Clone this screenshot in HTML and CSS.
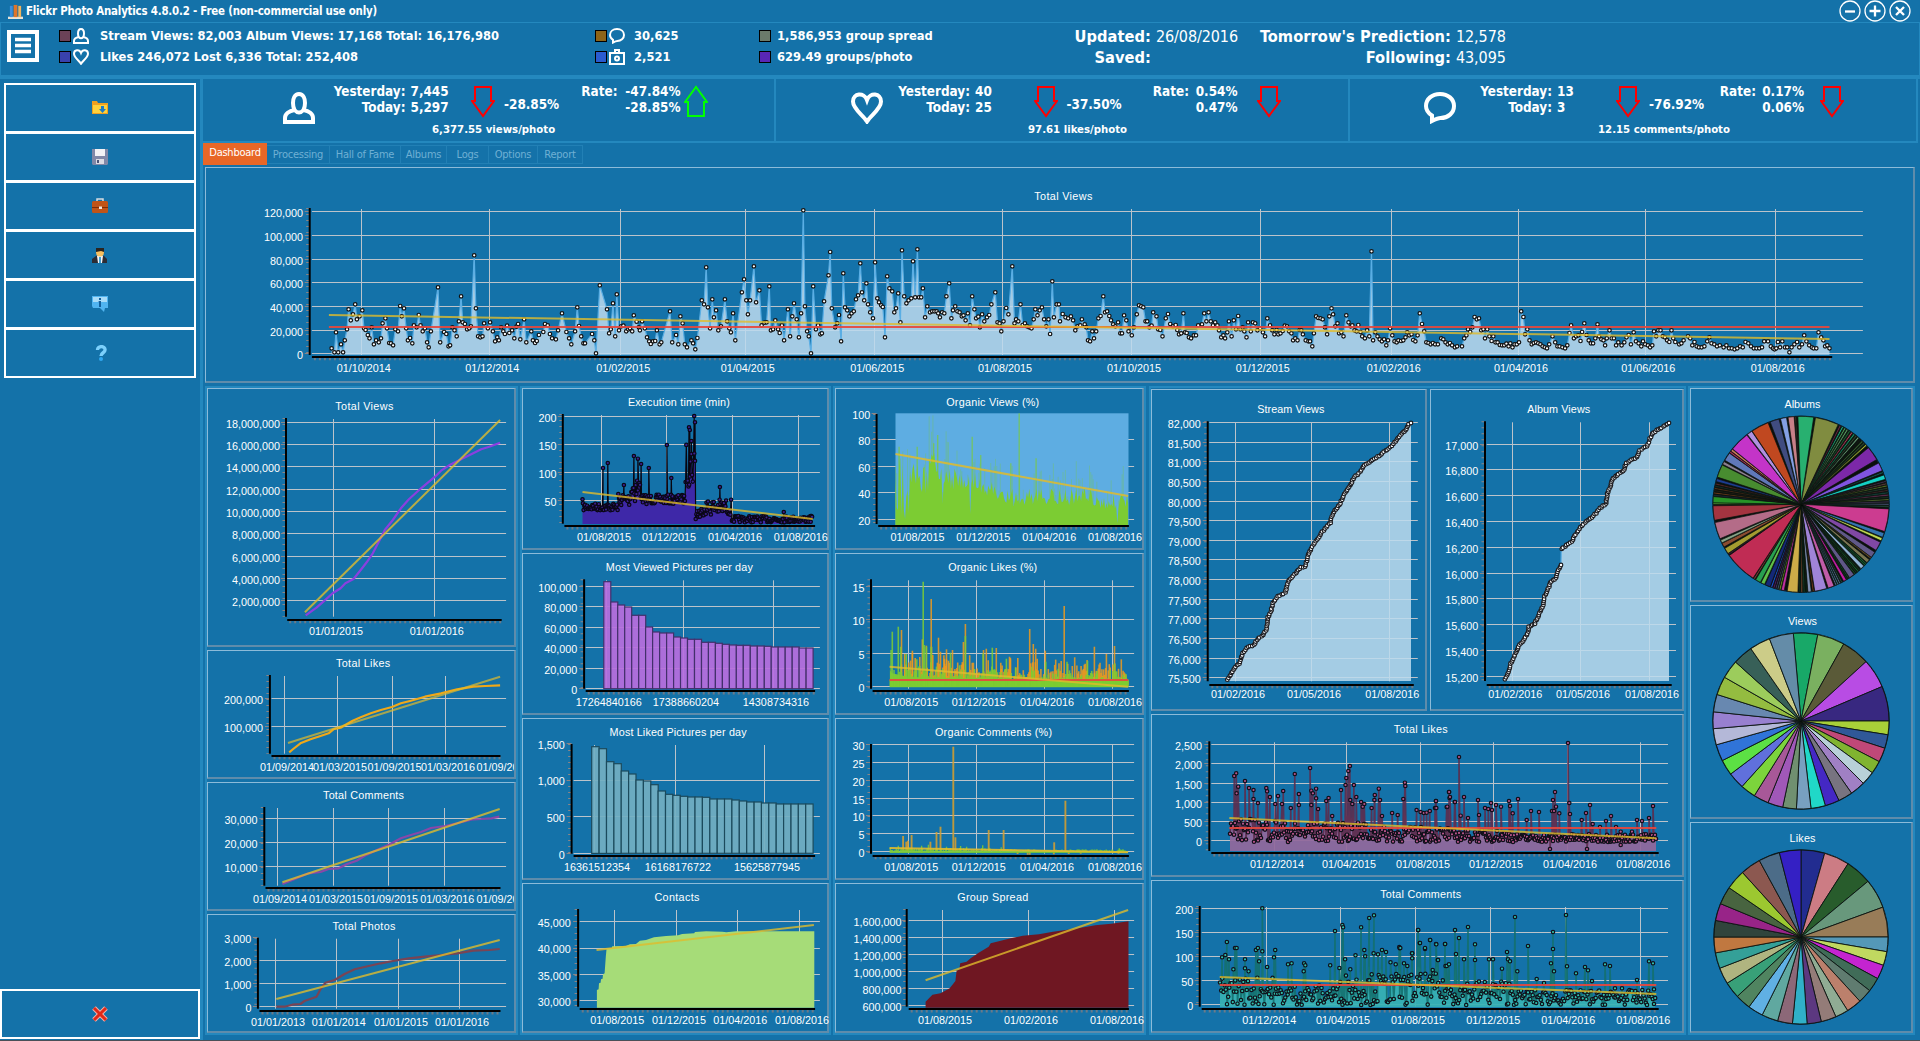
FILE: index.html
```html
<!DOCTYPE html>
<html lang="en">
<head>
<meta charset="utf-8">
<title>Flickr Photo Analytics</title>
<link rel="stylesheet" href="styles.css">
</head>
<body>
<svg class="defs" width="0" height="0">
  <symbol id="user" viewBox="0 0 32 32"><path d="M16 2c-4.500 0-6 5-6 9 0 3 .5 5 1.500 7C6 19 2 22 2 26v4h28v-4c0-4-4-7-9.500-8 1-2 1.500-4 1.500-7 0-4-1.500-9-6-9zM11.500 18q4.500 5 9 0" fill="none" stroke="#fff" stroke-width="4"/></symbol>
  <symbol id="heart" viewBox="0 0 32 32"><path d="M16 29.500C12 23 2 17 2 9.500 2 1 13 0 16 8 19 0 30 1 30 9.500 30 17 20 23 16 29.500z" fill="none" stroke="#fff" stroke-width="4"/></symbol>
  <symbol id="chat" viewBox="0 0 32 32"><path d="M8 29v-5.500C4 21 2 18 2 14 2 7 8 2 16 2s14 5 14 12-6 12-13.500 12C14 26 12 27 8 29z" fill="none" stroke="#fff" stroke-width="4"/></symbol>
  <symbol id="camera" viewBox="0 0 16 16"><path d="M1 4h14v11H1zM6 4V1h4v3" fill="none" stroke="#fff" stroke-width="2"/><circle cx="8" cy="9.500" r="2" fill="none" stroke="#fff" stroke-width="2"/></symbol>
  <symbol id="arrow" viewBox="0 0 24 33"><path d="M4 2H20V16H23L12 31 1 16H4Z" fill="none" stroke="currentColor" stroke-width="2"/></symbol>
</svg>

<div class="titlebar">
  <svg class="logo" viewBox="0 0 16 16"><path d="M0 13.500h16V16H0z" fill="#e8e4da"/><path d="M2 2h3v12H2z" fill="#3b8fe0"/><path d="M6 1h4v13H6z" fill="#e0752a"/><path d="M11 2h3v12h-3z" fill="#f0b45c"/></svg>
  <h1>Flickr Photo Analytics 4.8.0.2 - Free (non-commercial use only)</h1>
  <div class="winbtns">
    <svg viewBox="0 0 22 22"><circle cx="11" cy="11" r="10"/><path d="M6 11.500h10"/></svg>
    <svg viewBox="0 0 22 22"><circle cx="11" cy="11" r="10"/><path d="M5.500 11h11M11 5.500v11"/></svg>
    <svg viewBox="0 0 22 22"><circle cx="11" cy="11" r="10"/><path d="M7 7l8 8M15 7l-8 8" stroke-width="3"/></svg>
  </div>
</div>

<header class="summary">
  <svg class="menu" viewBox="0 0 32 32"><path d="M2 2h28v28H2z" fill="none" stroke="#fff" stroke-width="4"/><path d="M8 9.500h16M8 15.500h16M8 21.500h16" stroke="#fff" stroke-width="3.600"/></svg>
  <div class="legend l1">
    <div><i class="sw s1"></i><svg><use href="#user"/></svg><span>Stream Views: 82,003 Album Views: 17,168 Total: 16,176,980</span></div>
    <div><i class="sw s2"></i><svg><use href="#heart"/></svg><span>Likes 246,072 Lost 6,336 Total: 252,408</span></div>
  </div>
  <div class="legend l2">
    <div><i class="sw s3"></i><svg><use href="#chat"/></svg><span>30,625</span></div>
    <div><i class="sw s4"></i><svg><use href="#camera"/></svg><span>2,521</span></div>
  </div>
  <div class="legend l3">
    <div><i class="sw s5"></i><span>1,586,953 group spread</span></div>
    <div><i class="sw s6"></i><span>629.49 groups/photo</span></div>
  </div>
  <dl class="facts f1"><dt>Updated:</dt><dd>26/08/2016</dd><dt>Saved:</dt><dd></dd></dl>
  <dl class="facts f2"><dt>Tomorrow's Prediction:</dt><dd>12,578</dd><dt>Following:</dt><dd>43,095</dd></dl>
</header>

<div class="body">
  <nav class="side">
    <ul>
      <li><svg viewBox="0 0 16 16"><path d="M0 1h5l1 2h10v11H0z" fill="#f0a020"/><path d="M1 5h14v8H1z" fill="#ffd23c"/><path d="M9 6h3v3h2l-3.500 4L7 9h2z" fill="#1c7cc8"/></svg></li>
      <li><svg viewBox="0 0 16 16"><path d="M0 0h16v15l-1 1H1l-1-1z" fill="#8088a8"/><path d="M3 0h10v7H3z" fill="#f2f2f6"/><path d="M4 10h8v5H4z" fill="#dcdce4"/><path d="M5 11h2v3H5z" fill="#4c5478"/></svg></li>
      <li><svg viewBox="0 0 16 16"><path d="M5 3V1h6v2" fill="none" stroke="#d8dce0" stroke-width="1.500"/><rect y="3" width="16" height="12" rx="1.500" fill="#c05418"/><path d="M0 9h16v1H0z" fill="#7c2c08"/><path d="M7 8.500h3v2.500H7z" fill="#f0e8e0"/></svg></li>
      <li><svg viewBox="0 0 16 16"><path d="M0 16v-4l4-3h8l3 3v4z" fill="#2c2c34"/><path d="M5 9h6l-1 7H6z" fill="#f4f4f8"/><path d="M7 10h2v6H7z" fill="#40a0d0"/><circle cx="8" cy="5.500" r="4" fill="#f8c060"/><path d="M4 5V1h8v4l-3-1z" fill="#2a2420"/></svg></li>
      <li><svg viewBox="0 0 16 16"><path d="M0 0h16v12h-3l-1 4-4-4H1l-1-2z" fill="#50b4f0"/><path d="M1 1h14v5H1z" fill="#a8dcf8"/><path d="M7 2h2v2H7zM6.500 5H9v6H7V7z" fill="#14609c"/></svg></li>
      <li><svg viewBox="0 0 16 16"><path d="M5.500 5c0-4.500 8-4.500 7.500 0 0 3-4 2.500-4 6" fill="none" stroke="#7cd0fc" stroke-width="3.400"/><circle cx="9" cy="14" r="2" fill="#30a8f0"/></svg></li>
    </ul>
    <button class="close"><svg viewBox="0 0 16 16"><path d="M2 2l12 12M14 2L2 14" stroke="#f6b0a8" stroke-width="5"/><path d="M2 2l12 12M14 2L2 14" stroke="#e02818" stroke-width="3"/></svg></button>
  </nav>

  <main>
    <section class="stats">
      <div class="stat c1">
        <svg class="ico"><use href="#user"/></svg>
        <p class="lab">Yesterday:<br>Today:</p><p class="val">7,445<br>5,297</p>
        <svg class="arr down"><use href="#arrow"/></svg><p class="pct">-28.85%</p>
        <p class="lab">Rate:</p><p class="rate">-47.84%<br>-28.85%</p><svg class="arr up"><use href="#arrow"/></svg>
        <p class="per">6,377.55 views/photo</p>
      </div>
      <div class="stat c2">
        <svg class="ico"><use href="#heart"/></svg>
        <p class="lab">Yesterday:<br>Today:</p><p class="val">40<br>25</p>
        <svg class="arr down"><use href="#arrow"/></svg><p class="pct">-37.50%</p>
        <p class="lab">Rate:</p><p class="rate">0.54%<br>0.47%</p><svg class="arr down"><use href="#arrow"/></svg>
        <p class="per">97.61 likes/photo</p>
      </div>
      <div class="stat c3">
        <svg class="ico"><use href="#chat"/></svg>
        <p class="lab">Yesterday:<br>Today:</p><p class="val">13<br>3</p>
        <svg class="arr down"><use href="#arrow"/></svg><p class="pct">-76.92%</p>
        <p class="lab">Rate:</p><p class="rate">0.17%<br>0.06%</p><svg class="arr down"><use href="#arrow"/></svg>
        <p class="per">12.15 comments/photo</p>
      </div>
    </section>
    <div class="tabs"><span class="on t1">Dashboard</span><span class="t2">Processing</span><span class="t3">Hall of Fame</span><span class="t4">Albums</span><span class="t5">Logs</span><span class="t6">Options</span><span class="t7">Report</span></div>
    <div class="panel wide"><svg id="views-daily"></svg></div>
    <div class="board">
      <div class="group g1">
        <div class="panel"><svg id="views-total"></svg></div>
        <div class="panel"><svg id="likes-total"></svg></div>
        <div class="panel"><svg id="comments-total"></svg></div>
        <div class="panel"><svg id="photos-total"></svg></div>
      </div>
      <div class="group g2">
        <div class="panel"><svg id="exec"></svg></div>
        <div class="panel"><svg id="most-viewed"></svg></div>
        <div class="panel"><svg id="most-liked"></svg></div>
        <div class="panel"><svg id="contacts"></svg></div>
      </div>
      <div class="group g2">
        <div class="panel"><svg id="org-views"></svg></div>
        <div class="panel"><svg id="org-likes"></svg></div>
        <div class="panel"><svg id="org-comments"></svg></div>
        <div class="panel"><svg id="spread"></svg></div>
      </div>
      <div class="group g4">
        <div class="pair">
          <div class="panel"><svg id="stream"></svg></div>
          <div class="panel"><svg id="album"></svg></div>
        </div>
        <div class="panel"><svg id="likes-daily"></svg></div>
        <div class="panel"><svg id="comments-daily"></svg></div>
      </div>
      <div class="group g5">
        <div class="panel"><svg id="pie-albums"></svg></div>
        <div class="panel"><svg id="pie-views"></svg></div>
        <div class="panel"><svg id="pie-likes"></svg></div>
      </div>
    </div>
  </main>
</div>
<div class="edge"></div>
<script src="charts.js"></script>
</body>
</html>
```
FILE: styles.css
```css
* { box-sizing: border-box; margin: 0; padding: 0; }
body {
  width: 1920px; height: 1041px; overflow: hidden;
  background: #1472a9; color: #fff;
  font-family: "DejaVu Sans Condensed", "DejaVu Sans", sans-serif; font-stretch: condensed;
  display: flex; flex-direction: column;
}
svg { display: block; }
.defs { display: none; }

.titlebar { height: 22px; display: flex; align-items: center; padding: 0 9px 0 8px; }
.logo { width: 15px; height: 15px; }
h1 { font-size: 11.400px; font-weight: bold; margin-left: 3px; white-space: nowrap; letter-spacing: -.2px; }
.winbtns { margin-left: auto; display: flex; gap: 3px; }
.winbtns svg { width: 22px; height: 22px; fill: none; stroke: #fff; stroke-width: 1.300; }
.winbtns path { stroke-width: 2.300; }

.summary { height: 57px; border: 1px solid #2488be; border-bottom: 4px solid #2488be; display: flex; font-size: 12.800px; font-weight: bold; white-space: nowrap; }
.menu { width: 32px; height: 32px; margin: 7px 0 0 6px; }
.legend div { display: flex; align-items: center; height: 21px; }
.legend svg { width: 16px; height: 16px; margin-left: 2px; }
.legend span { margin: 0 0 1px 11px; }
.legend { padding-top: 2px; }
.l1 { margin-left: 20px; width: 536px; }
.l2 { width: 164px; }
.l2 span { margin-left: 9px; }
.l3 { width: 288px; }
.l3 span { margin-left: 6px; }
.sw { width: 12px; height: 12px; border: 1px solid #000; }
.s1 { background: #6b4257; } .s2 { background: #3941ad; } .s3 { background: #8d6418; }
.s4 { background: #2a5bd0; } .s5 { background: #6b7b6b; } .s6 { background: #5926b5; }
.facts { display: grid; grid-auto-rows: 21px; line-height: 21px; padding-top: 3px; font-size: 16px; column-gap: 5px; }
.facts dt { text-align: right; font-size: 16.300px; letter-spacing: .05px; }
.facts dd { font-weight: normal; letter-spacing: -.1px; }
.f1 { grid-template-columns: 104px 92px; }
.f2 { grid-template-columns: 203px 60px; }

.body { flex: 1; display: flex; }
.side { width: 200px; display: flex; flex-direction: column; justify-content: space-between; padding: 4px 0 1px; }
.side ul { list-style: none; width: 192px; margin-left: 4px; border: 2px solid #fff; }
.side li { height: 46px; display: flex; align-items: center; justify-content: center; }
.side li + li { height: 49px; border-top: 3px solid #fff; }
.side svg { width: 16px; height: 16px; }
.close { height: 50px; background: none; border: 2px solid #fff; display: flex; align-items: center; justify-content: center; }

main { flex: 1; border-left: 3px solid #2488be; display: flex; flex-direction: column; }
.stats { display: flex; height: 64px; width: 1715px; border-bottom: 2px solid #2488be; border-right: 2px solid #2488be; }
.stat { display: grid; grid-template-rows: 42px 20px; font-size: 13.400px; font-weight: bold; line-height: 16px; white-space: nowrap; padding-top: 1px; }
.stat + .stat { border-left: 2px solid #2488be; }
.c1 { width: 571px; grid-template-columns: 32px 90.500px 65.500px 23px 74px 49.500px 63px 1fr; padding-left: 80px; }
.c2 { width: 574px; grid-template-columns: 32px 87px 63.500px 23px 68px 64.500px 48.500px 1fr; padding-left: 75px; }
.c3 { width: 568px; grid-template-columns: 32px 96px 64px 23px 69px 48px 48px 1fr; padding-left: 74px; }
.stat p { padding-top: 4px; }
.ico { width: 32px; height: 32px; margin-top: 12px; }
.lab, .rate { text-align: right; }
.stat .val { padding-left: 5px; }
.stat .pct { padding: 17px 0 0 10px; }
.arr { width: 24px; height: 33px; margin-top: 5px; }
.down { color: #f00; }
.up { color: #0f0; transform: scaleY(-1); margin-left: 3px; }
.c2 .arr:nth-of-type(3) { margin-left: 19px; }
.c3 .arr:nth-of-type(3) { margin-left: 16px; }
.stat .per { grid-column: 1 / -1; font-size: 11.300px; padding-top: 0; }
.c1 .per { padding-left: 149px; } .c2 .per { padding-left: 177px; } .c3 .per { padding-left: 174px; }

.tabs { display: flex; height: 24px; align-items: flex-start; font-size: 11px; color: #6fb0d4; }
.tabs span { height: 19px; line-height: 17px; margin-top: 2px; border: 1px solid #2280b5; border-left: 0; text-align: center; white-space: nowrap; letter-spacing: -.25px; }
.tabs .on { height: 22px; margin-top: 0; line-height: 20px; background: #e86727; border: 0; color: #fff; }
.t1 { width: 64px; } .t2 { width: 63px; } .t3 { width: 71px; } .t4 { width: 46px; }
.t5 { width: 42px; } .t6 { width: 49px; } .t7 { width: 45px; }

.panel { border: 1px solid #8cbbd9; border-right: 2px solid #5f8cab; border-bottom: 2px solid #5f8cab; min-width: 0; min-height: 0; overflow: hidden; }
.panel svg { width: 100%; height: 100%; }
.g2 .panel, .g2 svg { overflow: visible; }
.wide { margin-left: 2px; width: 1710px; height: 216px; }
.board { margin: 3px 0 0 2px; display: grid; grid-template-columns: 313px 311px 313px 538px 227px; column-gap: 2px; height: 649px; }
.group { border: 2px solid #2488be; display: grid; row-gap: 3px; min-width: 0; }
.g1 { grid-template-rows: 259px 129px 129px 119px; }
.g2 { grid-template-rows: 162px 162px 162px 150px; }
.g4 { grid-template-rows: 323px 163px 153px; margin-left: 1px; }
.g5 { grid-template-rows: 214px 214px 211px; }
.pair { display: grid; grid-template-columns: 276px 1fr; column-gap: 3px; padding-top: 1px; }
.edge { height: 1px; background: #4a5058; }

text { font-family: "Liberation Sans", Arial, sans-serif; font-size: 10.800px; fill: #fff; }
```
FILE: charts.js
```js
// Every chart is drawn in page pixels: the viewBox follows the panel's position.
let seed = 7;
const rnd = () => (seed = (seed * 16807) % 2147483647) / 2147483647;
const rand = (a, b) => a + (b - a) * rnd();

function open(id) {
  const el = document.getElementById(id), r = el.getBoundingClientRect();
  el.setAttribute('viewBox', `${r.left} ${r.top} ${r.width} ${r.height}`);
  return el;
}
const n = v => v.toFixed(1);
const line = (x1, y1, x2, y2, c, w, extra = '') => `<path d="M${n(x1)} ${n(y1)}L${n(x2)} ${n(y2)}" stroke="${c}" stroke-width="${w}" fill="none" ${extra}/>`;
const label = (x, y, t, a) => `<text x="${n(x)}" y="${n(y)}" text-anchor="${a}">${t}</text>`;

// s.o = [left, top, horizontal units per px]; vertical scale is 3 units per px
function chart(id, s) {
  const X = v => s.o[0] + v / s.o[2], Y = v => s.o[1] + v / 3;
  const snap = v => Math.floor(v) + .5;
  let h = `<text x="${n(X(s.title[0]))}" y="${n(Y(s.title[1]) + 4)}" text-anchor="middle" textLength="${s.title[3]}">${s.title[2]}</text>`;
  const [vx, v0, v1] = s.v, [hy, h0, h1] = s.h;
  const pts = a => { const r = []; for (let i = 0; i < a.length; i += 2) r.push([X(a[i]), Y(a[i + 1])]); return r; };
  const path = p => 'M' + p.map(q => n(q[0]) + ' ' + n(q[1])).join('L');
  s.rows.forEach((r, i) => {
    if (r - v0 > 2) h += line(X(h0), snap(Y(r)), X(s.right), snap(Y(r)), '#bcc3ca', 1);
    h += line(X(vx) - 5, snap(Y(r)), X(vx), snap(Y(r)), '#8b8587', 1);
    h += label(X(s.edge), Y(r) + 5.3, s.ylab[i], 'end');
  });
  s.cols.forEach((c, i) => {
    if (c < h1 - 5) h += line(snap(X(c)), Y(v0 + 3), snap(X(c)), Y(v1), '#bcc3ca', 1);
    h += label(X(c) + 2.6, Y(s.xy) + 4, s.xlab[i], 'middle');
  });
  const g = { X, Y, pts, path, floor: Y(s.floor || v1) };
  h += s.draw ? s.draw(g) : '';
  if (s.red) h += line(X(s.red[0]), Math.round(Y(s.red[1])), X(s.red[2]), Math.round(Y(s.red[1])), '#e5483e', 2, 'opacity=".92"');
  if (s.trend) { const t = s.trend; h += line(X(t[0]), Y(t[1]), X(t[2]), Y(t[3]), '#e0bb2c', 2, `opacity="${s.to || .8}"`); }
  h += line(X(vx) - 2, Y(v0), X(vx) - 2, Y(v1), '#8b8587', 3, 'stroke-dasharray="1 5"');
  h += line(X(h0) + 2, Y(hy) + 2, X(h1), Y(hy) + 2, '#6c7a88', 3, 'stroke-dasharray="2 3"');
  h += line(X(vx), Y(v0), X(vx), Y(v1), '#000', 2) + line(X(h0), Math.round(Y(hy)), X(h1), Math.round(Y(hy)), '#000', 2);
  open(id).innerHTML = h;
}
const curve = (c, a, w = 2.2) => g => `<path d="${g.path(g.pts(a))}" fill="none" stroke="${c}" stroke-width="${w}" stroke-linejoin="round"/>`;
function area(g, p, fill, op, stroke = 'none') {
  return `<path d="${g.path(p)}L${n(p[p.length - 1][0])} ${n(g.floor)}L${n(p[0][0])} ${n(g.floor)}Z" fill="${fill}" fill-opacity="${op}"/>` +
    (stroke === 'none' ? '' : `<path d="${g.path(p)}" fill="none" stroke="${stroke}" stroke-width="1.2"/>`);
}
const dots = (p, f, s, r, w) => p.map(q => `<circle cx="${n(q[0])}" cy="${n(q[1])}" r="${r}" fill="${f}" stroke="${s}" stroke-width="${w}"/>`).join('');
const seq = (a, b, step, f) => { let t = []; for (let v = a; v >= b; v -= step) t.push(f ? f(v) : v.toLocaleString('en-US')); return t; };

// Daily views
const dailyA = [240,565,245,577,248,517,252,577,257,553,261,577,264,541,268,508,271,448,275,481,279,463,283,433,286,478,291,469,296,451,299,505,302,510,306,525,309,535,313,502,317,553,321,541,326,547,330,535,333,490,338,475,341,505,345,549,348,550,352,556,356,508,361,514,365,438,368,469,372,445,376,505,379,541,383,534,387,550,390,496,395,502,399,465,402,496,406,514,410,505,414,547,417,562,421,514,434,382,438,547,445,516,449,522,453,559,456,556,460,502,464,511,468,529,472,484,476,409,479,487,483,492,487,508,491,505,494,499,500,286,503,445,507,529,511,532,515,529,518,490,525,505,529,487,534,514,538,544,542,532,545,541,549,502,553,514,556,522,560,497,564,519,569,511,573,535,577,500,580,492,584,538,591,478,595,547,604,514,607,541,611,549,614,543,618,525,626,516,629,492,634,496,638,522,642,535,649,538,653,511,660,460,668,516,673,535,677,553,684,514,688,442,691,498,695,529,699,550,702,550,715,522,719,541,722,580,729,376,742,448,746,520,749,508,753,430,757,529,760,403,764,511,768,499,772,497,777,514,781,508,784,505,788,514,791,466,796,485,800,502,802,511,806,484,811,505,815,532,819,544,822,552,826,544,830,543,833,511,838,553,841,547,857,454,861,547,868,525,872,553,876,469,880,490,884,553,888,562,896,541,899,550,903,568,907,534,915,421,919,433,923,322,926,442,930,505,934,418,937,472,941,451,945,511,950,499,957,418,961,484,965,505,968,517,972,460,976,541,988,397,992,358,996,421,999,463,1003,421,1010,319,1014,427,1020,391,1024,496,1029,488,1033,487,1038,379,1041,511,1045,508,1049,481,1054,508,1057,519,1061,496,1065,541,1072,448,1076,529,1080,469,1083,430,1088,478,1092,532,1096,460,1100,151,1103,439,1107,514,1110,529,1114,580,1118,379,1123,508,1127,496,1131,523,1134,520,1138,424,1146,346,1149,276,1152,445,1158,502,1162,490,1165,465,1169,544,1173,340,1176,442,1180,451,1184,469,1188,460,1192,454,1196,418,1200,406,1204,310,1207,397,1211,421,1215,370,1218,433,1222,457,1227,475,1231,307,1235,415,1238,427,1242,436,1245,441,1249,532,1253,349,1257,385,1262,394,1266,457,1269,445,1273,400,1277,487,1280,271,1284,409,1288,430,1292,421,1297,415,1300,304,1304,412,1308,268,1311,412,1315,412,1318,385,1322,472,1326,439,1331,457,1335,454,1339,454,1343,454,1346,460,1349,472,1353,457,1357,460,1361,409,1366,370,1370,475,1373,451,1377,439,1381,454,1385,457,1389,469,1392,466,1396,481,1400,460,1404,496,1408,409,1412,448,1415,475,1419,470,1422,502,1426,463,1430,484,1435,472,1439,465,1443,433,1450,397,1454,487,1458,490,1461,514,1465,484,1470,444,1474,463,1481,319,1485,490,1488,478,1492,484,1496,433,1500,495,1504,490,1508,499,1512,502,1516,505,1520,478,1523,448,1527,466,1531,451,1535,442,1539,478,1543,499,1547,478,1550,522,1554,364,1557,472,1562,433,1566,433];
const dailyB = [0,484,5,462,10,472,15,475,20,469,24,481,28,511,32,499,37,496,40,478,45,493,48,502,51,541,55,544,59,514,62,535,66,514,70,475,74,468,79,409,82,457,86,454,90,468,93,481,97,493,101,499,106,487,110,520,113,520,117,466,121,481,125,514,131,526,135,502,140,463,144,436,148,439,152,442,156,484,159,484,163,502,167,497,170,457,176,469,179,508,183,510,187,529,193,475,197,462,201,492,206,499,211,495,214,510,217,523,221,520,225,460,228,517,231,519,235,532,239,535,244,526,248,526,252,496,259,493,263,460,267,484,271,457,275,484,279,496,283,487,287,496,290,511,294,532,298,526,301,535,305,517,308,484,313,529,317,481,321,508,325,468,329,508,333,502,336,514,340,532,343,487,348,514,352,487,356,490,360,511,365,505,370,517,374,529,378,475,383,496,387,511,391,523,395,510,398,523,402,520,406,513,410,497,414,499,418,514,422,520,425,541,429,535,433,541,437,510,440,511,443,523,448,541,453,544,456,544,460,559,463,520,467,469,471,474,475,475,479,478,483,502,487,523,491,469,495,445,498,463,502,499,506,490,509,520,513,517,517,529,522,466,526,487,530,499,533,496,537,511,541,514,544,495,548,516,551,529,556,535,560,511,564,529,568,274,571,541,575,517,579,529,583,538,587,544,591,538,595,556,598,541,602,505,606,526,610,544,614,547,617,541,622,543,626,541,630,532,633,517,637,526,641,523,644,540,648,544,652,526,656,460,660,492,664,514,668,547,672,549,676,553,680,549,684,553,689,553,695,535,699,538,703,547,707,553,711,549,715,556,720,562,724,559,733,559,737,535,741,526,744,508,748,516,752,502,756,471,760,478,764,475,768,511,772,508,775,535,779,508,783,529,787,543,790,529,794,547,798,547,802,555,806,556,810,556,814,551,818,559,821,550,825,562,829,553,833,553,837,547,841,454,845,471,848,523,852,508,856,541,860,553,864,549,868,547,872,550,876,553,880,559,884,562,888,565,892,553,898,529,903,547,907,559,911,559,916,562,921,565,925,556,929,519,932,496,937,535,941,529,945,526,949,543,952,516,956,490,960,525,964,541,968,550,972,550,976,535,980,493,983,529,987,538,991,541,994,556,997,535,1002,511,1006,535,1010,535,1014,556,1018,547,1024,556,1029,547,1033,532,1037,525,1041,553,1046,517,1050,544,1055,550,1060,559,1063,544,1067,553,1072,556,1076,562,1080,556,1083,514,1087,529,1091,511,1095,511,1099,529,1103,532,1107,541,1111,546,1115,511,1118,535,1122,546,1129,553,1133,550,1137,541,1145,529,1149,535,1153,556,1157,546,1161,559,1165,562,1170,562,1175,559,1180,544,1184,532,1188,550,1193,553,1198,559,1203,556,1210,562,1215,556,1220,565,1225,565,1230,568,1235,565,1240,559,1245,562,1250,546,1255,550,1260,559,1265,565,1270,565,1275,565,1280,562,1284,544,1291,544,1296,559,1300,565,1303,568,1306,565,1309,546,1313,562,1317,544,1322,562,1326,562,1330,577,1334,562,1339,553,1344,546,1348,562,1353,553,1357,526,1361,544,1366,556,1371,562,1374,565,1379,565,1383,517,1388,532,1392,541,1395,559,1399,556,1403,565];
const daily = dailyA.concat(dailyB.map((v, i) => i % 2 ? v : v + 1568));
chart('views-daily', {
  o: [200, 160, 1.8233], title: [1574, 108, 'Total Views', 58], v: [200, 144, 585], h: [590, 204, 2976], right: 3032, edge: 188, floor: 584,
  rows: [154, 226, 298, 367, 439, 511, 580], ylab: seq(120000, 0, 20000),
  cols: [294, 528, 767, 994, 1230, 1463, 1698, 1933, 2172, 2404, 2636, 2872], xy: 624,
  xlab: ['01/10/2014', '01/12/2014', '01/02/2015', '01/04/2015', '01/06/2015', '01/08/2015', '01/10/2015', '01/12/2015', '01/02/2016', '01/04/2016', '01/06/2016', '01/08/2016'],
  draw: g => { const p = g.pts(daily); return area(g, p, '#bddbee', .85, '#5aaee4') + dots(p, '#fff', '#111', 1.75, 1.2); },
  red: [235, 500, 2971], trend: [235, 465, 2971, 537]
});

// Cumulative column
const A6 = [200, 380, 2.489], A7 = [200, 700, 2.489], A8 = [830, 380, 2.489], A9 = [830, 700, 2.489], A10 = [1400, 380, 3], A11 = [1400, 700, 3];
chart('views-total', {
  o: A6, title: [409, 78, 'Total Views', 58], v: [214, 114, 710], h: [719, 217, 751], right: 762, edge: 199,
  rows: [127, 193, 259, 328, 394, 461, 529, 595, 661], ylab: seq(18e6, 2e6, 2e6), cols: [332, 583], xy: 753, xlab: ['01/01/2015', '01/01/2016'],
  draw: curve('#8a3fe0', [263,706,290,683,310,662,330,640,350,625,362,610,382,597,400,570,415,547,430,520,445,485,460,450,480,420,500,385,520,358,550,325,585,290,600,272,620,256,650,238,680,220,700,208,720,200,747,188]),
  trend: [261, 697, 747, 120]
});
const half = ['01/09/2014', '01/03/2015', '01/09/2015', '01/03/2016', '01/09/2016'];
chart('likes-total', {
  o: A7, title: [406, -111, 'Total Likes', 54], v: [174, -75, 161], h: [167, 178, 748], right: 762, edge: 157,
  rows: [-5, 79], ylab: ['200,000', '100,000'], cols: [210, 342, 478, 611, 749], xy: 201, xlab: half,
  draw: curve('#f0a818', [222,157,232,147,250,130,275,118,300,108,320,100,332,88,350,83,365,73,380,62,400,52,425,40,450,30,478,21,500,10,525,2,560,-10,600,-20,640,-32,680,-40,710,-42,747,-44]),
  trend: [219, 129, 747, -70], to: .7
});
chart('comments-total', {
  o: A7, title: [407, 286, 'Total Comments', 81], v: [160, 321, 557], h: [564, 163, 748], right: 762, edge: 143,
  rows: [355, 427, 499], ylab: seq(30000, 10000, 10000), cols: [193, 332, 469, 609, 749], xy: 597, xlab: half,
  draw: curve('#8848a8', [205,552,230,540,270,520,300,516,320,507,345,505,365,493,390,482,410,467,440,450,470,434,500,415,525,405,550,396,575,384,610,378,640,370,680,358,700,357,725,355,745,350]),
  trend: [205, 547, 746, 327]
});
chart('photos-total', {
  o: A7, title: [408, 678, 'Total Photos', 63], v: [144, 713, 926], h: [933, 148, 748], right: 762, edge: 128,
  rows: [712, 781, 851, 920], ylab: seq(3000, 0, 1000), cols: [188, 339, 494, 646], xy: 966, xlab: ['01/01/2013', '01/01/2014', '01/01/2015', '01/01/2016'],
  draw: curve('#7a4454', [190,920,210,920,230,914,250,912,260,903,290,890,300,868,312,848,335,840,360,822,385,808,420,798,450,790,480,783,520,775,560,770,600,765,640,760,680,752,720,750,746,747]),
  trend: [190, 897, 746, 720]
});

// Merge a jittered baseline with the recorded peaks
function noisy(x0, x1, step, base, peaks) {
  const p = [];
  for (let x = x0; x <= x1; x += step) p.push([x, base(x)]);
  for (let i = 0; i < peaks.length; i += 2) p.push([peaks[i], peaks[i + 1]]);
  return p.sort((a, b) => a[0] - b[0]).flat();
}
const fourMonths = ['01/08/2015', '01/12/2015', '01/04/2016', '01/08/2016'];
chart('exec', {
  o: A6, title: [1192, 66, 'Execution time (min)', 102], v: [903, 102, 431], h: [438, 907, 1531], right: 1543, edge: 887, floor: 432,
  rows: [109, 193, 277, 361], ylab: seq(200, 50, 50), cols: [999, 1161, 1325, 1489], xy: 471, xlab: fourMonths,
  draw: g => {
    const b = x => x < 1040 ? rand(370, 392) : x < 1070 ? rand(340, 378) : x < 1100 ? rand(280, 368) : x < 1208 ? rand(344, 372) : x < 1232 ? rand(190, 320) : x < 1250 ? rand(378, 422) : x < 1322 ? rand(358, 406) : rand(408, 427);
    const p = g.pts(noisy(953, 1524, 1.8, b, [952,358,1003,264,1015,249,1055,315,1080,228,1090,236,1098,252,1117,264,1162,195,1173,294,1217,142,1219,150,1223,183,1230,108,1232,127,1294,321,1453,396,1520,408]));
    return area(g, p, '#3e28a8', 1, '#07060f') + dots(p, '#3c1f90', '#0a0716', 1.7, 1.2);
  }, trend: [952, 336, 1525, 417]
});
const bars = (x0, x1, tops, floor, fill, stroke) => g => tops.map((t, i) => {
  const w = (x1 - x0) / tops.length, a = g.X(x0 + w * i), b = g.X(x0 + w * (i + 1));
  return `<rect x="${n(a)}" y="${n(g.Y(t))}" width="${n(b - a)}" height="${n(g.Y(floor) - g.Y(t))}" fill="${fill}" fill-opacity=".93" stroke="${stroke}" stroke-width="1.2"/>`;
}).join('');
chart('most-viewed', {
  o: A6, title: [1193, 562, 'Most Viewed Pictures per day', 147], v: [956, 598, 926], h: [933, 960, 1531], right: 1543, edge: 939,
  rows: [619, 680, 742, 802, 865, 926], ylab: seq(100000, 0, 20000), cols: [1011, 1203, 1427], xy: 966, xlab: ['17264840166', '17388660204', '14308734316'],
  draw: bars(1005, 1526, [605,666,675,681,706,706,741,756,759,759,771,774,778,778,787,787,790,793,795,796,796,798,798,799,801,801,801,801,804,804], 926, '#b86ede', '#43306c')
});
chart('most-liked', {
  o: A7, title: [1190, 97, 'Most Liked Pictures per day', 137], v: [925, 132, 461], h: [467, 930, 1531], right: 1543, edge: 908,
  rows: [130, 240, 350, 460], ylab: seq(1500, 0, 500), cols: [982, 1183, 1405], xy: 500, xlab: ['16361512354', '16168176722', '15625877945'],
  draw: bars(975, 1526, [140,146,185,191,213,222,240,243,254,273,283,286,289,291,291,292,297,297,297,300,303,306,306,309,309,312,312,312,312,312], 460, '#72aec2', '#1b4a5c')
});
chart('contacts', {
  o: A7, title: [1187, 591, 'Contacts', 45], v: [941, 627, 920], h: [927, 945, 1531], right: 1543, edge: 923, floor: 923,
  rows: [664, 744, 823, 902], ylab: seq(45000, 30000, 5000), cols: [1032, 1186, 1338, 1492], xy: 961, xlab: fourMonths,
  draw: g => area(g, g.pts([988,870,992,868,993,850,997,848,998,838,1002,836,1003,823,1007,820,1010,770,1012,745,1025,745,1026,739,1060,738,1070,733,1085,732,1095,722,1110,720,1130,712,1160,708,1190,706,1200,702,1230,700,1232,696,1260,694,1300,695,1310,697,1335,694,1529,694]), '#a6dc78', 1),
  trend: [987, 750, 1528, 675]
});

chart('org-views', {
  o: A8, title: [405, 66, 'Organic Views (%)', 93], v: [116, 102, 432], h: [438, 120, 744], right: 757, edge: 100, floor: 435,
  rows: [100, 179, 259, 338, 418], ylab: seq(100, 20, 20), cols: [211, 375, 539, 703], xy: 471, xlab: fourMonths,
  draw: g => {
    let h = `<rect x="${n(g.X(163))}" y="${n(g.Y(100))}" width="${n((743 - 163) / 2.489)}" height="${n(335 / 3)}" fill="#5eade2"/>`, p = [];
    const dip = { 179: 405, 186: 417, 195: 400, 280: 372, 348: 402, 458: 378, 715: 430 };
    for (let x = 163; x <= 742; x += 3) {
      let y = x < 200 ? rand(230, 400) : x < 245 ? rand(245, 345) : x < 280 ? rand(210, 300) : x < 375 ? rand(265, 335) : x < 410 ? rand(300, 350) : x < 600 ? rand(325, 375) : x < 650 ? rand(320, 372) : rand(342, 390);
      for (const k in dip) if (Math.abs(x - k) < 2) y = dip[k];
      p.push([g.X(x), g.Y(y)]);
      if (rnd() < .4) h += line(g.X(x), g.Y(rand(y - (x < 300 ? 130 : 100), y)), g.X(x), g.floor, '#7ccc33', 1, 'opacity=".3"');
    }
    [[172, 200], [217, 200], [258, 190], [268, 165], [354, 170], [375, 225], [471, 100], [513, 235], [450, 250]].forEach(q => { h += line(g.X(q[0]), g.Y(q[1]), g.X(q[0]), g.floor, '#7ccc33', 1.4, 'opacity=".65"'); });
    return h + area(g, p, '#7ccc33', 1);
  }, trend: [163, 222, 742, 348], to: .85
});
const spikes = (g, a, base, c, w = 1.6, op = .85) => { let h = ''; for (let i = 0; i < a.length; i += 2) h += line(g.X(a[i]), g.Y(a[i + 1]), g.X(a[i]), g.Y(base), c, w, `opacity="${op}"`); return h; };
chart('org-likes', {
  o: A8, title: [405, 562, 'Organic Likes (%)', 89], v: [102, 598, 926], h: [933, 106, 744], right: 757, edge: 86, floor: 922,
  rows: [619, 718, 820, 920], ylab: seq(15, 0, 5), cols: [196, 364, 534, 703], xy: 966, xlab: fourMonths,
  draw: g => {
    let o = [], gr = [];
    for (let x = 150; x < 742; x += 2.3) {
      const k = x < 300 ? 1 : x < 450 ? .85 : .7;
      if (x > 175) o.push(x, 905 - rnd() * rnd() * 95 * k - 5);
      gr.push(x, 900 - rnd() * rnd() * 60 * k + (x > 450 ? 6 : 0));
    }
    o.push(178,750,252,657,253,800,270,773,275,815,337,732,332,786,382,810,389,806,414,804,497,747,506,792,512,806,583,678,536,812,609,832,625,858,640,840,658,800,688,822,708,798,725,838,205,812,205,820,186,822,305,810,290,808,285,836,230,778,240,797,354,848,425,848,449,838,570,850);
    return spikes(g, o, 915, '#f09a1c') + area(g, g.pts([149, 870, 154, 880, 200, 892, 743, 903]), '#7ccc33', .95) +
      spikes(g, gr, 920, '#7ccc33') + spikes(g, [155,755,152,810,170,740,176,800,190,822,232,605,235,795,240,800,252,800,337,768,404,803,381,820,439,836,216,838,300,818,462,862,502,860,537,845,568,866,590,845,641,843,708,850], 920, '#7ccc33');
  }, red: [148, 901, 742], trend: [148, 860, 742, 920]
});
chart('org-comments', {
  o: A9, title: [407, 97, 'Organic Comments (%)', 117], v: [102, 132, 461], h: [467, 106, 744], right: 757, edge: 86, floor: 459,
  rows: [133, 187, 241, 295, 347, 401, 454], ylab: seq(30, 0, 5), cols: [196, 364, 534, 703], xy: 500, xlab: fourMonths,
  draw: g => {
    const a = []; for (let x = 150; x < 742; x += 2.5) a.push(x, rand(x < 400 ? 444 : 448, 454));
    return line(g.X(106), Math.floor(g.Y(133)) + .5, g.X(757), Math.floor(g.Y(133)) + .5, '#bcc3ca', 1) +
      spikes(g, [182,408,190,425,194,422,203,405,250,425,265,396,275,380,307,140,312,412,395,390,432,390,558,427,586,302,467,462,492,464,497,464,557,463,594,462,624,461,718,461], 454, '#dba02c', 1.9) +
      spikes(g, a.concat([170,437,228,437,245,434,290,440,325,438,340,440,380,436,426,442,720,445]), 459, '#7ccc33', 1.4);
  }, trend: [148, 444, 742, 457], to: .9
});
chart('spread', {
  o: A9, title: [405, 591, 'Group Spread', 71], v: [191, 627, 920], h: [927, 196, 744], right: 757, edge: 178, floor: 923,
  rows: [661, 713, 763, 815, 866, 916], ylab: seq(16e5, 6e5, 2e5), cols: [280, 494, 708], xy: 961, xlab: ['01/08/2015', '01/02/2016', '01/08/2016'],
  draw: g => area(g, g.pts([238,905,252,888,255,884,275,880,298,865,312,843,315,812,322,808,324,790,340,785,350,775,370,758,395,740,400,730,425,722,450,715,480,707,520,703,555,695,600,688,640,680,660,676,700,671,743,664]), '#6f1722', 1),
  trend: [238, 841, 742, 630]
});

// Growth curves with dense markers
function growth(a) {
  return g => {
    const p = g.pts(a); let m = [];
    for (let i = 1; i < p.length; i++) {
      const [x0, y0] = p[i - 1], [x1, y1] = p[i], d = Math.hypot(x1 - x0, y1 - y0), k = Math.max(1, Math.round(d / 1.9));
      if (x1 - x0 < 1 && d > 10) { m.push([x0, y0]); continue; }
      for (let j = 0; j < k; j++) m.push([x0 + (x1 - x0) * j / k + rand(-.5, .5), y0 + (y1 - y0) * j / k + rand(-.5, .5)]);
    }
    m.push(p[p.length - 1]);
    return area(g, p, '#bddbee', .86, '#5aaee4') + dots(m, '#fff', '#1c1c20', 1.8, 1.2);
  };
}
const quarters = ['01/02/2016', '01/05/2016', '01/08/2016'];
chart('stream', {
  o: A8, title: [1147, 88, 'Stream Views', 67], v: [940, 124, 904], h: [914, 944, 1453], right: 1463, edge: 923, floor: 903,
  rows: [128, 187, 244, 304, 364, 421, 481, 539, 598, 658, 716, 775, 835, 893], ylab: seq(82000, 75500, 500), cols: [1009, 1198, 1393], xy: 942, xlab: quarters,
  draw: growth([990,898,1000,880,1012,856,1020,850,1025,825,1040,800,1055,795,1065,775,1078,765,1087,745,1090,712,1098,690,1102,670,1115,650,1133,638,1142,600,1160,580,1172,562,1183,560,1190,525,1200,500,1210,485,1225,455,1245,428,1252,400,1268,375,1278,348,1290,325,1305,292,1320,275,1330,255,1350,240,1375,220,1390,205,1405,188,1420,165,1432,150,1440,132,1446,129])
});
chart('album', {
  o: A10, title: [476, 88, 'Album Views', 63], v: [255, 124, 903], h: [914, 260, 815], right: 828, edge: 235, floor: 903,
  rows: [193, 268, 347, 424, 503, 580, 656, 733, 811, 889], ylab: seq(17000, 15200, 200), cols: [338, 541, 748], xy: 942, xlab: quarters,
  draw: growth([316,898,326,875,330,857,342,830,355,800,370,780,383,760,387,740,405,730,417,705,430,675,434,650,447,620,450,608,465,598,475,570,483,555,484,507,495,500,515,485,530,458,545,438,560,425,580,408,600,385,618,372,622,340,633,315,636,300,655,282,670,272,680,248,710,232,720,210,740,198,748,180,757,160,775,148,795,138,807,129])
});

// Daily likes and comments; the first list of peaks is on the narrower scale of the left half
const widen = a => a.map((v, i) => i % 2 ? v : v * 1.2053 - 1710);
const six = ['01/12/2014', '01/04/2015', '01/08/2015', '01/12/2015', '01/04/2016', '01/08/2016'];
function lollipops(g, a, fill, stem, mark, flat) {
  const p = g.pts(a), cap = g.Y(flat);
  const low = p.map((q, i) => {
    const near = p.slice(Math.max(0, i - 1), i + 2).map(r => r[1]);
    return [q[0], Math.max(cap, near.reduce((s, v) => s + v, 0) / near.length - 1)];
  });
  return area(g, low, fill, .93) +
    `<path d="${g.path(p)}" fill="none" stroke="${stem}" stroke-width="1.6" opacity=".9"/>` +
    dots(p, mark, '#10101a', 1.7, 1.2);
}
chart('likes-daily', {
  o: A11, title: [62, 88, 'Total Likes', 54], v: [-572, 124, 453], h: [459, -566, 776], right: 804, edge: -594, floor: 453,
  rows: [133, 190, 250, 307, 364, 421], ylab: seq(2500, 0, 500), cols: [-377, -161, 61, 280, 502, 722], xy: 492, xlab: six,
  draw: g => lollipops(g, noisy(-510, 768, 3, x => { const k = x < -360 ? 70 : x < -100 ? 58 : x < 150 ? 46 : x < 340 ? 36 : 24; return 426 - rnd() * k; },
    widen([1006,228,1011,220,1016,260,1012,280,1033,243,1043,264,1054,270,1054,297,1065,309,1086,264,1088,274,1095,291,1108,312,1115,288,1128,273,1125,312,1157,222,1147,324,1167,282,1167,315,1195,204,1198,272,1202,280,1210,266,1210,295,1198,315,1215,327,1241,294,1235,303,1272,270,1250,348,1285,234,1290,213,1294,198,1283,255,1295,300,1304,255,1310,291,1300,312,1322,306,1330,312,1326,320,1348,324,1356,285,1366,266,1355,300,1369,300,1374,348,1399,339,1413,345,1427,297,1431,248,1432,258,1460,330,1470,336,1478,339,1485,338,1493,333,1508,303,1509,324,1535,321,1541,276,1542,294,1555,306])
      .concat([177,171,182,347,192,291,147,276,150,291,142,320,165,306,108,303,105,324,204,354,234,300,237,345,255,324,265,327,273,309,276,330,288,315,303,320,327,303,330,318,338,340,354,297,380,360,393,333,417,336,459,300,456,333,462,333,465,276,468,320,478,340,504,129,508,309,510,342,545,360,558,339,570,315,578,372,600,381,618,363,633,348,648,381,662,395,696,395,711,360,726,363,747,354,759,318,450,447,561,447,662,435])),
    '#92689c', '#5c2c4c', '#b8558c', 320),
  red: [-512, 383, 769], trend: [-512, 354, 769, 415]
});
chart('comments-daily', {
  o: A11, title: [62, 582, 'Total Comments', 81], v: [-601, 618, 920], h: [927, -595, 776], right: 804, edge: -620, floor: 922,
  rows: [625, 697, 769, 841, 913], ylab: seq(200, 0, 50), cols: [-400, -179, 46, 272, 497, 722], xy: 961, xlab: six,
  draw: g => lollipops(g, noisy(-540, 768, 3.5, x => { const k = x < -380 ? 85 : x < -180 ? 60 : x < 120 ? 95 : x < 340 ? 75 : 45; return 915 - rnd() * k; },
    widen([976,772,984,765,988,726,993,778,1008,744,1012,744,1033,778,1033,805,1004,808,1042,814,1060,750,1065,744,1068,784,1076,754,1076,625,1088,801,1108,750,1105,772,1140,793,1149,790,1180,790,1183,796,1179,814,1245,796,1257,693,1275,675,1277,682,1282,778,1268,804,1295,808,1308,766,1322,682,1330,750,1332,769,1342,654,1354,646,1353,760,1364,763,1374,750,1384,756,1395,787,1417,741,1418,745,1408,793,1437,798,1449,760,1449,775,1464,690,1468,729,1481,744,1494,720,1509,733,1513,780,1500,810,1531,732,1532,798])
      .concat([54,690,60,729,75,747,90,720,108,732,114,780,36,760,1,744,12,790,135,732,165,690,177,714,168,762,192,778,204,681,225,733,225,780,147,793,140,798,267,778,279,778,306,806,321,756,324,778,330,784,345,651,352,814,384,738,410,837,432,849,459,696,459,747,453,790,462,814,498,645,501,799,528,820,555,801,564,811,615,793,630,798,576,843,645,865,666,865,711,840,747,784,759,790,762,868])),
    '#38b2b4', '#14706e', '#30c2ae', 800),
  red: [-541, 855, 769], trend: [-541, 831, 769, 882]
});

// Pies: slices are [from, to, colour] in degrees clockwise from the top
function pie(id, cx, cy, r, title, ty, tl, slices, dark) {
  const pt = a => `${n(cx + r * Math.sin(a * Math.PI / 180))} ${n(cy - r * Math.cos(a * Math.PI / 180))}`;
  let h = `<text x="${cx + 1.5}" y="${ty + 4}" text-anchor="middle" textLength="${tl}">${title}</text>`;
  h += `<circle cx="${cx}" cy="${cy}" r="${r}" fill="${dark ? '#0b0f0c' : 'none'}" stroke="#0a2030" stroke-width="1.4"/>`;
  slices.forEach(s => { h += `<path d="M${cx} ${cy}L${pt(s[0])}A${r} ${r} 0 0 1 ${pt(s[1])}Z" fill="${s[2]}" stroke="#0c1410" stroke-width="${dark ? .7 : .9}"/>`; });
  open(id).innerHTML = h;
}
const join = (a, c) => c.map((k, i) => [a[i], i + 1 < a.length ? a[i + 1] : a[0] + 360, k]);
pie('pie-views', 1801, 721, 88, 'Views', 621, 29, join(
  [-5, 11, 29, 47.6, 67, 90, 99, 108, 117.5, 126, 135, 145, 154.5, 164, 173.5, 183, 192, 202, 212, 222, 233, 243.3, 254.3, 265, 276, 287.5, 299.8, 312, 325.3, 339],
  ['#18a868', '#7ab060', '#5a5a38', '#b84ce4', '#382880', '#a8d038', '#305898', '#c04878', '#80b430', '#b8d0d8', '#a080c4', '#787480', '#4428c4', '#20d8c8', '#78a0c0', '#709070', '#a058b8', '#a85898', '#7cd43c', '#6070dc', '#5ce044', '#3074d8', '#b4b8d8', '#9880d0', '#6888b0', '#94bc40', '#9ccc5c', '#386058', '#cccc88', '#648ca8']));
pie('pie-likes', 1801, 937, 87, 'Likes', 838, 26, join(
  [0, 15.8, 32.7, 50.3, 70, 90, 99.7, 109, 118.5, 128, 137.5, 147.6, 156.4, 166.5, 176, 185.7, 195.6, 206.5, 216.7, 227, 238, 249, 259.5, 270, 281, 292.5, 304.4, 317.8, 331.4, 345.6],
  ['#222c90', '#cc7c84', '#285c2c', '#68987c', '#987c58', '#5498b8', '#c0d860', '#c424d0', '#406c58', '#607c70', '#bc806c', '#90ac94', '#947c78', '#5c3880', '#30b0c8', '#8c6878', '#60a8a0', '#60b0e4', '#508460', '#38a078', '#b0b480', '#34a098', '#c07840', '#30443c', '#982488', '#486440', '#9cc830', '#8c5850', '#4c6c88', '#3420c4']));
const slivers = (a, b, c) => c.map((k, i) => [a + (b - a) * i / c.length, a + (b - a) * (i + .6) / c.length, k]);
pie('pie-albums', 1801, 504.3, 88, 'Albums', 404, 36, [
  [-2, 8.3, '#28b070'], [9.5, 25, '#808c40'], ...slivers(26, 49, ['#7c2848', '#20c890', '#50a860', '#60a868', '#206838', '#c04060', '#18a070', '#304830', '#6ca078', '#101810', '#386030', '#284828', '#a0b030']),
  [50, 59.4, '#7c28a8'], [62, 67.5, '#8054e0'], [68.3, 69.3, '#18706c'], [70.5, 73.5, '#14d0c4'],
  ...slivers(74.5, 92.5, ['#603868', '#784848', '#80a030', '#30503c', '#603038', '#186058', '#903870', '#203828', '#80a040', '#604880', '#5c6c9c', '#28584c']),
  [93, 108, '#cc3c90'], [109, 112, '#3474b0'], [112.5, 114.5, '#c0d850'], [115.5, 121.5, '#8048a4'], [123, 127, '#605888'], [127.3, 127.9, '#c08040'], [129, 131.500, '#787450'],
  ...slivers(132, 134.2, ['#28a850', '#189040']), [134.5, 137, '#90b4d4'], ...slivers(138, 143, ['#184820', '#20a040', '#204828', '#207830']), [143, 146.5, '#605888'], ...slivers(147, 149, ['#20a048', '#186030']),
  [149, 151, '#c01ca0'], ...slivers(152, 157.5, ['#306048', '#7ca4dc', '#60a8d0', '#7ca4dc']), [158, 162, '#c05ca8'], [163, 171, '#a084d8'], ...slivers(171.5, 173, ['#9c4820']), [173.3, 175.5, '#8090b4'],
  ...slivers(176, 182, ['#103010', '#186038', '#c07040', '#103820']), [182, 189, '#ccac48'], [191, 193, '#c030a0'], ...slivers(193.5, 199, ['#98d028', '#6078a0', '#604890', '#8818a0']), [199, 200.2, '#1c50d8'], [200.5, 204, '#142878'],
  [204.5, 207, '#60c048'], [207.5, 211, '#28a050'], [211.5, 212.7, '#803c34'], [213, 234.5, '#c02c54'], [235, 235.8, '#501850'], [236, 240, '#a49c30'], [241, 243.7, '#8c4c30'], [244, 246, '#88a488'],
  [247, 258, '#b46c88'], [259.5, 269, '#a43440'], [270, 271, '#60d040'], [271, 275, '#289428'], ...slivers(275.5, 284.5, ['#283048', '#a05020', '#302418', '#80401c', '#203830', '#803030']), [285, 287, '#1c3c90'],
  [288, 296.500, '#488c30'], [297, 299, '#8c8090'], [300, 305.5, '#6078b8'], [305.8, 307, '#b03058'], [307.2, 308.8, '#c87858'], [309, 322, '#c434c8'], [322.5, 326, '#b090e0'], [326.3, 338, '#c04820'], [339.5, 345.5, '#404c80'], [346.5, 350.5, '#84a0e4'], [351.5, 355.5, '#c88088'], [356, 356.800, '#603830']
], true);
```
